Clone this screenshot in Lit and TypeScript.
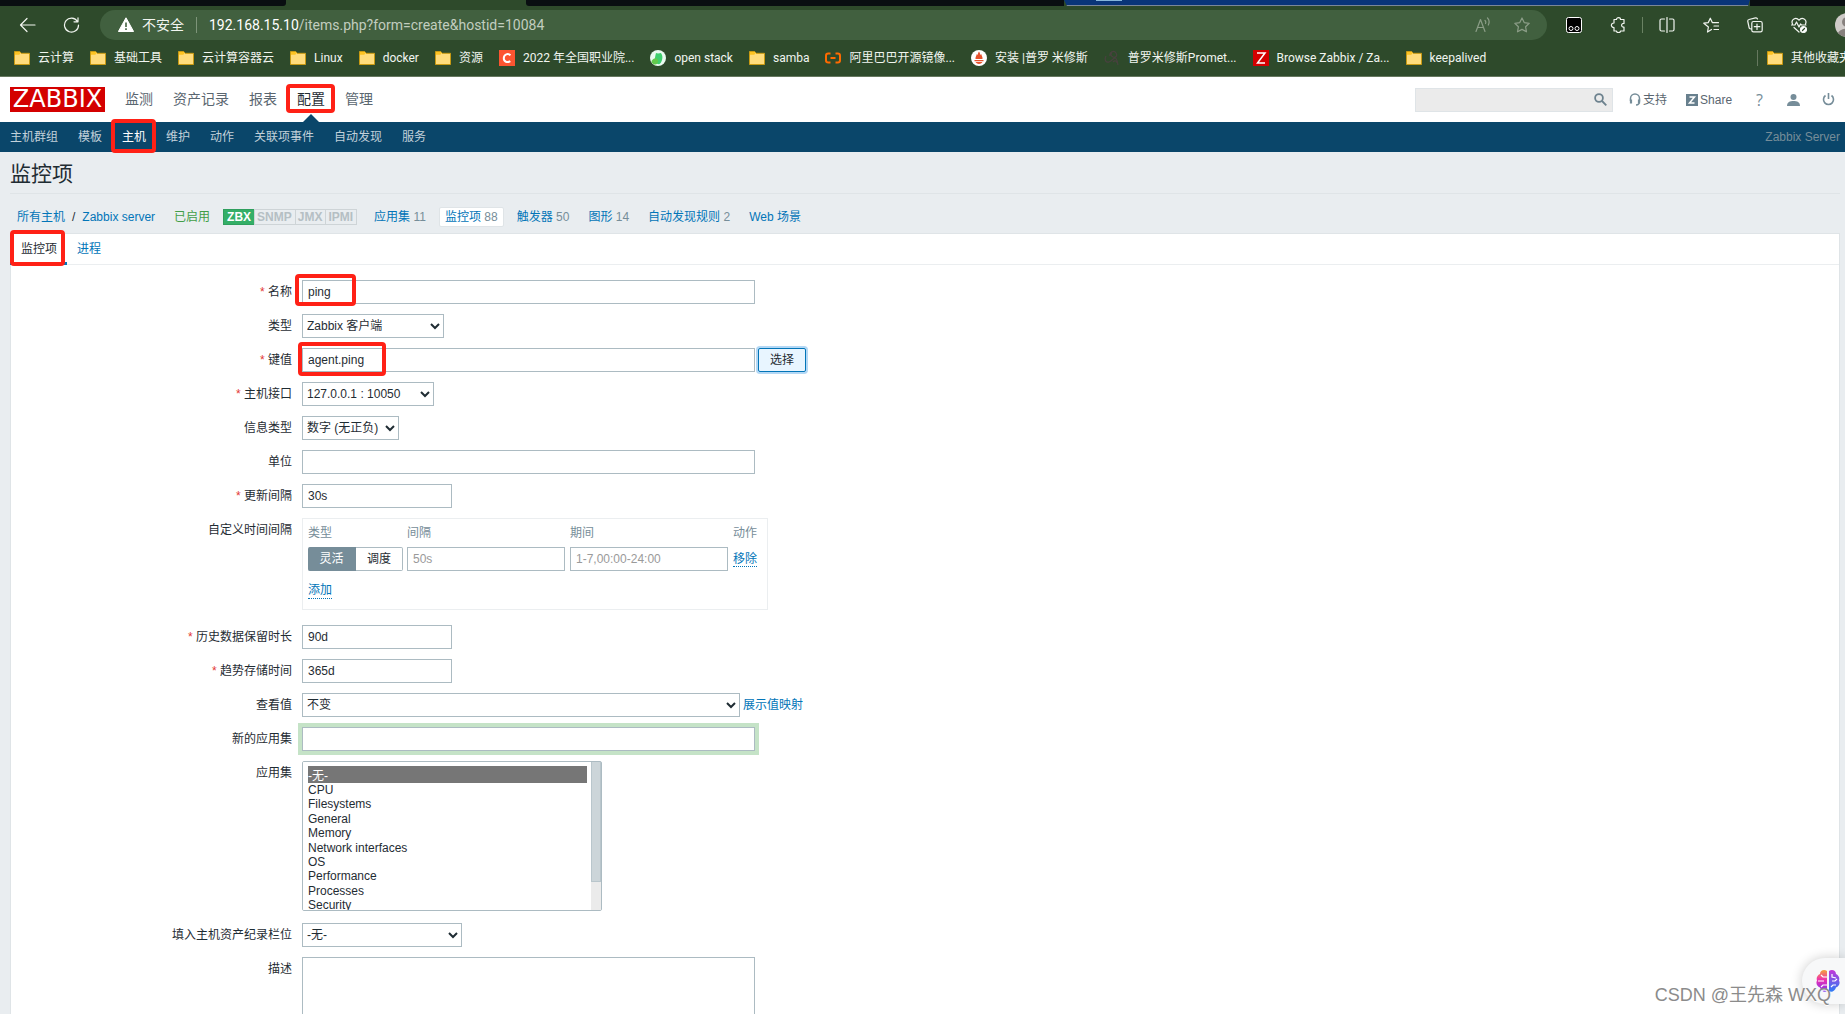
import { LitElement, html, css, svg, nothing } from "lit";
import { customElement } from "lit/decorators.js";
import { classMap } from "lit/directives/class-map.js";

const folder = html`<svg class="ico" viewBox="0 0 16 16"><path d="M.5 1.500h5.200l1.500 1.800h8.300v11.200H.5z" fill="#ffdc7c" stroke="#c99a12"/><path d="M1 2h4.500l1 1.300-1.200 1.400H1z" fill="#fdc321"/></svg>`;
const cIcon = html`<svg class="ico" viewBox="0 0 16 16"><rect width="16" height="16" fill="#fc5531"/><path d="M11.500 5.200C9 3.200 5 4 4.800 8s3.800 5 6.500 3.200" fill="none" stroke="#fff" stroke-width="2"/></svg>`;
const stackIcon = html`<svg class="ico" viewBox="0 0 16 16"><circle cx="8" cy="8" r="8" fill="#eafaf0"/><path d="M5.500 5l.5-2 2 .5 3-.5 1 2c1.200 3-.5 8.500-3 9.200L4 13z" fill="#3fcf6e"/><path d="M1.500 11C3 8 7 7 8 10c.5 3-1.500 5-3.500 4.500S1.500 12.500 1.500 11z" fill="#62c84b"/></svg>`;
const aliIcon = html`<svg class="ico" viewBox="0 0 16 16"><path d="M5.500 3.500H3.200C1.800 3.500 1 4.300 1 5.700v4.600c0 1.400.8 2.200 2.200 2.200h2.300M10.500 3.500h2.300c1.400 0 2.200.8 2.200 2.200v4.600c0 1.400-.8 2.200-2.200 2.200h-2.300M5.500 8h5" fill="none" stroke="#ff6a00" stroke-width="2"/></svg>`;
const promIcon = html`<svg class="ico" viewBox="0 0 16 16"><circle cx="8" cy="8" r="8" fill="#fff"/><path d="M8 1.500c1 1.500 1.200 2.500 1.200 3.500l1-1c.2 1.500 1.600 2.800 1.300 5h-7C4.200 7 5.500 6 5.800 4l1 1C6.800 4 7 3 8 1.500zM3.500 10h9v1.300h-9zM4.500 12h7c-1.500 2.600-5.500 2.600-7 0z" fill="#e6522c"/></svg>`;
const darkIcon = html`<svg class="ico" viewBox="0 0 16 16"><path d="M6 6c-1-4 4-6 6-3s-1 5-3 4-3-3-1-4M2 6c-2 4 0 7 3 6s3-3 6-4c2 0 2 3 3 7M9 12c2-2 4-1 4 1" fill="none" stroke="#49413f" stroke-width="1.200"/></svg>`;
const zIcon = html`<svg class="ico" viewBox="0 0 16 16"><rect width="16" height="16" fill="#d40000"/><path d="M4 3h8L4.500 13H12" fill="none" stroke="#fff" stroke-width="1.500"/></svg>`;

const BOOKMARKS = [
  { icon: folder, text: "云计算" },
  { icon: folder, text: "基础工具" },
  { icon: folder, text: "云计算容器云" },
  { icon: folder, text: "Linux" },
  { icon: folder, text: "docker" },
  { icon: folder, text: "资源" },
  { icon: cIcon, text: "2022 年全国职业院..." },
  { icon: stackIcon, text: "open stack" },
  { icon: folder, text: "samba" },
  { icon: aliIcon, text: "阿里巴巴开源镜像..." },
  { icon: promIcon, text: "安装 |普罗 米修斯" },
  { icon: darkIcon, text: "普罗米修斯Promet..." },
  { icon: zIcon, text: "Browse Zabbix / Za..." },
  { icon: folder, text: "keepalived" },
];

@customElement("browser-bar")
class BrowserBar extends LitElement {
  static styles = css`
    :host { display: block; flex: none; background: #2e4a2b; color: #f1f5f0; font: 12px/16px Roboto, "Noto Sans CJK SC", sans-serif; overflow: hidden; border-bottom: 1px solid #66785f; }
    .tabs { display: flex; height: 6px; }
    .tab { background: #090e11; }
    .tab.one { width: 286px; border-bottom-right-radius: 3px; }
    .gap { width: 240px; }
    .tab.two { flex: 1; border-bottom-left-radius: 3px; }
    .session { width: 686px; display: flex; background: #0a3578; border-bottom: 1px solid #7b8798; box-sizing: border-box; clip-path: polygon(0 0, 100% 0, 684px 100%, 3px 100%); }
    .session i { width: 26px; height: 1px; margin-left: 32px; background: #86b5da; }
    .tab.three { width: 95px; }
    .tools { display: flex; align-items: center; height: 38px; padding-left: 18px; }
    button { all: unset; display: flex; }
    svg { display: block; }
    .back { margin-right: 27px; }
    .reload { margin-right: 20px; }
    .address { flex: 1; min-width: 0; display: flex; align-items: center; height: 30px; border-radius: 15px; background: #41603f; padding: 0 17px 0 18px; font-size: 14px; }
    .address .sec { margin-left: 8px; }
    .address .sep { width: 1px; height: 16px; background: #7d9479; margin: 0 12px; }
    .url { flex: 1; color: #c2cdbf; white-space: nowrap; }
    .url b { font-weight: 400; color: #fff; }
    .faint { gap: 23px; display: flex; }
    .right { display: flex; align-items: center; margin-left: 19px; gap: 28px; }
    .right .sep { width: 1px; height: 16px; background: #6a8263; margin: 0 -12px; }
    .avatar { width: 10px; height: 24px; overflow: hidden; }
    .marks { display: flex; align-items: center; height: 28px; padding: 0 0 4px 14px; gap: 16px; white-space: nowrap; }
    .marks a { color: inherit; text-decoration: none; display: flex; align-items: center; gap: 8px; }
    .ico { width: 16px; height: 16px; flex: none; }
    .other { margin-left: auto; display: flex; border-left: 1px solid #66785f; padding-left: 9px; width: 78px; }
  `;
  render() {
    const line = (d: unknown, w = 16, color = "#f1f5f0") => html`<svg width=${w} height="16" viewBox="0 0 ${w} 16" fill="none" stroke=${color} stroke-width="1.200" stroke-linejoin="round" stroke-linecap="round">${d}</svg>`;
    return html`
      <div class="tabs"><div class="tab one"></div><div class="gap"></div><div class="tab two"></div><div class="session"><i></i></div><div class="tab three"></div></div>
      <div class="tools">
        <button class="back" aria-label="后退">${line(svg`<path d="M17 8H3M9 1.500L2.500 8 9 14.500"/>`, 18)}</button>
        <button class="reload" aria-label="刷新">${line(svg`<path d="M14.500 4.500A7 7 0 1 0 15.500 8M15 .8v4h-4"/>`, 17)}</button>
        <div class="address">
          <svg width="16" height="16" viewBox="0 0 16 16"><path d="M8 .8L15.600 14.500H.4z" fill="#fff" stroke="#fff" stroke-linejoin="round"/><path d="M8 5.500v4.500M8 11.300v1.800" stroke="#41603f" stroke-width="1.600"/></svg>
          <span class="sec">不安全</span><span class="sep"></span>
          <span class="url"><b>192.168.15.10</b>/items.php?form=create&amp;hostid=10084</span>
          <div class="faint">
            <button aria-label="朗读">${line(svg`<path d="M1 14.500L5.500 2.500 10 14.500M2.600 10.500h6M10 3.500c1 1 1 2 .5 3M12.500 1c2 2 2 4.500 .8 7"/>`, 16, "#8b9d87")}</button>
            <button aria-label="收藏">${line(svg`<path d="M8 1l2.200 4.600 5 .7-3.600 3.500.9 5L8 12.400l-4.500 2.400.9-5L.8 6.300l5-.7z"/>`, 16, "#8b9d87")}</button>
          </div>
        </div>
        <div class="right">
          <button aria-label="扩展程序"><svg width="16" height="16" viewBox="0 0 16 16"><rect x=".5" y=".5" width="15" height="15" rx="2" fill="#000" stroke="#fff"/><circle cx="5" cy="11.500" r="2" fill="none" stroke="#fff"/><circle cx="11" cy="11.500" r="2" fill="none" stroke="#fff"/></svg></button>
          <button aria-label="扩展">${line(svg`<path d="M4 2.500h2.500c0-2.500 4-2.500 4 0H14v4c-3.200-.6-3.200 4.100 0 3.500v4h-3.500c0 2.200-4 2.200-4 0H4V10.500c-3.500 0-3.500-4.500 0-4.500z"/>`)}</button>
          <span class="sep"></span>
          <button aria-label="分屏">${line(svg`<path d="M5.500 2H2.500c-.8 0-1.500.7-1.500 1.500v9c0 .8.7 1.500 1.500 1.500h3M10.500 2h3c.8 0 1.500.7 1.500 1.500v9c0 .8-.7 1.500-1.500 1.500h-3M8 .5v15"/>`)}</button>
          <button aria-label="收藏夹">${line(svg`<path d="M8.500 12.500L4.500 15l.9-5L.8 6.200l4.500-.6L7.300 1.200l2 4.400H15.500M11 9h4.500M11 12.500h4.500"/>`)}</button>
          <button aria-label="集锦">${line(svg`<path d="M4 12c-1.500 0-2-.8-2-2L.8 4.500c-.2-1 .3-1.800 1.200-2L8.500 .9c1-.2 1.700.1 2 1.100M6.500 4.500h7c1 0 1.700.7 1.700 1.700v7c0 1-.7 1.700-1.700 1.700h-7c-1 0-1.700-.7-1.700-1.700v-7c0-1 .7-1.700 1.700-1.700zM10 7v5.500M7.300 9.700h5.500"/>`)}</button>
          <button aria-label="健康">${line(svg`<path d="M1.500 7C-.5 2.500 5-.5 8 3.200 11-.5 16.500 2.500 14.500 7M.5 8H4l1.500-3L8 10l1.500-3 1 1H15M3 10.500l5 4.500"/><circle cx="12.500" cy="12.500" r="3" fill="#fff"/><path d="M11.500 13.500l2-2" stroke="#2e4a2b"/>`)}</button>
          <div class="avatar"><svg width="24" height="24" viewBox="0 0 24 24"><circle cx="12" cy="12" r="12" fill="#cfcbc8"/><circle cx="12" cy="9" r="5" fill="#87817e"/><path d="M3 20c2-6 16-6 18 0-4 5-14 5-18 0z" fill="#87817e"/></svg></div>
        </div>
      </div>
      <nav class="marks">
        ${BOOKMARKS.map((b) => html`<a href="#">${b.icon}<span>${b.text}</span></a>`)}
        <div class="other"><a href="#">${folder}<span>其他收藏夹</span></a></div>
      </nav>`;
  }
}

@customElement("zabbix-header")
class ZabbixHeader extends LitElement {
  static styles = css`
    :host { display: block; flex: none; background: #fff; font: 12px/16px "Liberation Sans", "Noto Sans CJK SC", sans-serif; }
    a, button { all: unset; cursor: pointer; }
    .top { display: flex; align-items: center; height: 45px; padding: 0 10px; }
    .logo { background: #d40000; color: #fff; width: 95px; height: 25px; font: 24px/25px "DejaVu Sans", sans-serif; text-align: center; }
    .menu { display: flex; gap: 20px; margin-left: 20px; font-size: 14px; line-height: 20px; padding-bottom: 2px; color: #5a6670; }
    .menu a, .sub a { position: relative; }
    .menu .on { color: #1f2c33; }
    .menu .on::before { content: ""; position: absolute; left: 6px; top: 25px; border: 8px solid transparent; border-top: 0; border-bottom-color: #0a466a; }
    .on::after { content: ""; position: absolute; border: 4px solid #ff2116; border-radius: 4px; z-index: 2; }
    .menu .on::after { inset: -5px -10px -4px -11px; }
    .sub .on::after { inset: -10px -10px -8px -11px; }
    .sub .on { color: #fff; box-shadow: 0 8px 0 -1px #0a466a, 0 9px 0 -1px #fff; }
    .tools { margin-left: auto; display: flex; align-items: center; color: #5a6670; }
    .search { display: flex; align-items: center; box-sizing: border-box; width: 198px; height: 24px; background: #ebebeb; border: 1px solid #dfe4e7; padding-right: 5px; margin-right: 16px; }
    .search input { all: unset; flex: 1; min-width: 0; }
    .tools a { display: flex; align-items: center; gap: 2px; margin-right: 19px; }
    .tools .help { font: 16px/16px "Open Sans", sans-serif; color: #768d99; margin: 0 24px 0 5px; }
    .tools .user { margin-right: 22px; }
    .tools .power { margin: 0; }
    svg { display: block; }
    .sub { display: flex; align-items: center; gap: 20px; height: 30px; padding: 0 5px 0 10px; background: #0a466a; color: #c2d1da; }
    .server { margin-left: auto; color: #768d99; }
  `;
  render() {
    const top = ["监测", "资产记录", "报表", "配置", "管理"];
    const sub = ["主机群组", "模板", "主机", "维护", "动作", "关联项事件", "自动发现", "服务"];
    return html`
      <div class="top">
        <a class="logo" href="#">ZABBIX</a>
        <nav class="menu">${top.map((t) => html`<a href="#" class=${classMap({ on: t === "配置" })}>${t}</a>`)}</nav>
        <div class="tools">
          <div class="search"><input type="text" aria-label="搜索" /><button aria-label="搜索"><svg width="13" height="13" viewBox="0 0 13 13" fill="none" stroke="#6d828e" stroke-width="1.800"><circle cx="5" cy="5" r="3.900"/><path d="M8 8l4.300 4.300"/></svg></button></div>
          <a href="#"><svg width="12" height="13" viewBox="0 0 12 13" fill="none" stroke="#768d99" stroke-width="1.500"><path d="M1.500 8V5.500a4.500 4.500 0 0 1 9 0V8c0 3-1.500 4-3.500 4"/><path d="M2 6.500v4M10 6.500v4" stroke-width="2.200"/></svg>支持</a>
          <a href="#"><svg width="12" height="12" viewBox="0 0 12 12"><rect width="12" height="12" fill="#68808e"/><path d="M3.500 3h5l-5 6h5" fill="none" stroke="#fff" stroke-width="1.500"/></svg>Share</a>
          <a href="#" class="help">?</a>
          <a href="#" class="user" aria-label="用户"><svg width="13" height="12" viewBox="0 0 13 12" fill="#768d99"><circle cx="6.500" cy="3" r="3"/><path d="M0 12c0-4 3-5 6.500-5S13 8 13 12z"/></svg></a>
          <a href="#" class="power" aria-label="退出"><svg width="13" height="13" viewBox="0 0 13 13" fill="none" stroke="#768d99" stroke-width="1.600"><path d="M3.500 2.500a5 5 0 1 0 6 0M6.500 0v6"/></svg></a>
        </div>
      </div>
      <nav class="sub">${sub.map((t) => html`<a href="#" class=${classMap({ on: t === "主机" })}>${t}</a>`)}<span class="server">Zabbix Server</span></nav>`;
  }
}

@customElement("item-form")
class ItemForm extends LitElement {
  static styles = css`
    :host { display: block; font: 12px/16px "Liberation Sans", "Noto Sans CJK SC", sans-serif; color: #1f2c33; padding-top: 15px; }
    .row { display: grid; grid-template-columns: 281px 1fr; column-gap: 10px; margin-bottom: 10px; }
    .label { text-align: right; line-height: 24px; }
    .req::before { content: "* "; color: #e33734; }
    .field { display: flex; align-items: center; min-height: 24px; position: relative; }
    input, select, textarea, button { font: inherit; color: inherit; box-sizing: border-box; margin: 0; border: 1px solid #acbbc2; border-radius: 0; background: #fff; height: 24px; outline: 0; }
    input { padding: 0 5px; }
    input::placeholder { color: #9a9a9a; }
    select { padding: 0; }
    .wide { width: 453px; }
    .short { width: 150px; }
    .w142 { width: 142px; }
    .w132 { width: 132px; }
    .w97 { width: 97px; }
    .w438 { width: 438px; }
    .w160 { width: 160px; }
    .pick { width: 48px; margin-left: 3px; background: #e8f5ff; border-color: #0275b8; border-radius: 2px; box-shadow: 0 0 0 2px #b4d8f5; padding: 0; }
    .glow { box-shadow: 0 0 0 4px #c5e3c7; }
    .mark { position: absolute; border: 4px solid #ff2116; border-radius: 4px; pointer-events: none; }
    .m-name { left: -7px; top: -6px; width: 53px; height: 24px; }
    .m-key { left: -4px; top: -6px; width: 80px; height: 26px; }
    .box { border: 1px solid #ebeef0; padding: 4px 5px 10px 5px; margin-bottom: 5px; }
    table { border-spacing: 0; }
    th { font-weight: 400; text-align: left; color: #768d99; padding: 2px 5px 6px 0; line-height: 16px; }
    td { padding: 0 5px 0 0; }
    th:first-child, td:first-child { padding-right: 4px; }
    .iv { width: 158px; display: block; }
    .toggle { display: flex; }
    .toggle button { width: 47px; padding: 0; border-radius: 0 2px 2px 0; border-left: 0; }
    .toggle .sel { width: 48px; background: #768d99; border-color: #768d99; color: #fff; border-radius: 2px 0 0 2px; }
    a { color: #0275b8; text-decoration: none; }
    .dot { border-bottom: 1px dotted #0275b8; }
    .add { margin-top: 12px; display: inline-block; line-height: 15px; }
    .map { margin-left: 3px; }
    .apps { width: 300px; height: 150px; padding: 4px 14px 0 5px; border-radius: 2px; scrollbar-width: none; }
    .apps option { padding: 0; }
    .apps option:checked { background: #767676 linear-gradient(#767676, #767676); color: #fff; }
    .track { position: absolute; left: 289px; top: 1px; bottom: 1px; width: 10px; background: #ebebeb; pointer-events: none; }
    .track::before { content: ""; display: block; box-sizing: border-box; height: 81%; background: #ccd5d9; border: 1px solid #b9c6cc; border-top: 0; }
    textarea { height: 120px; resize: none; display: block; }
    .tall { margin-bottom: 12px; }
  `;
  private row(label: string, body: unknown, id = "", req = false, cls = "") {
    return html`<div class="row ${cls}"><label class="label ${req ? "req" : ""}" for=${id || nothing}>${label}</label><div class="field">${body}</div></div>`;
  }
  render() {
    const apps = ["-无-", "CPU", "Filesystems", "General", "Memory", "Network interfaces", "OS", "Performance", "Processes", "Security"];
    return html`<form>
      ${this.row("名称", html`<input id="name" class="wide" .value=${"ping"} /><span class="mark m-name"></span>`, "name", true)}
      ${this.row("类型", html`<select id="type" class="w142"><option>Zabbix 客户端</option></select>`, "type")}
      ${this.row("键值", html`<input id="key" class="wide" .value=${"agent.ping"} /><button type="button" class="pick">选择</button><span class="mark m-key"></span>`, "key", true)}
      ${this.row("主机接口", html`<select id="iface" class="w132"><option>127.0.0.1 : 10050</option></select>`, "iface", true)}
      ${this.row("信息类型", html`<select id="vtype" class="w97"><option>数字 (无正负)</option></select>`, "vtype")}
      ${this.row("单位", html`<input id="units" class="wide" />`, "units")}
      ${this.row("更新间隔", html`<input id="delay" class="short" .value=${"30s"} />`, "delay", true)}
      ${this.row("自定义时间间隔", html`<div class="box"><table>
        <thead><tr><th>类型</th><th>间隔</th><th>期间</th><th>动作</th></tr></thead>
        <tbody><tr>
          <td><div class="toggle"><button type="button" class="sel">灵活</button><button type="button">调度</button></div></td>
          <td><input class="iv" placeholder="50s" aria-label="间隔" /></td>
          <td><input class="iv" placeholder="1-7,00:00-24:00" aria-label="期间" /></td>
          <td><a class="dot" href="#">移除</a></td>
        </tr></tbody></table><a class="dot add" href="#">添加</a></div>`)}
      ${this.row("历史数据保留时长", html`<input id="history" class="short" .value=${"90d"} />`, "history", true)}
      ${this.row("趋势存储时间", html`<input id="trends" class="short" .value=${"365d"} />`, "trends", true)}
      ${this.row("查看值", html`<select id="map" class="w438"><option>不变</option></select><a class="map" href="#">展示值映射</a>`, "map")}
      ${this.row("新的应用集", html`<input id="newapp" class="wide glow" />`, "newapp")}
      ${this.row("应用集", html`<select id="apps" class="apps" multiple size="10">${apps.map((a, i) => html`<option ?selected=${i === 0}>${a}</option>`)}</select><span class="track"></span>`, "apps", false, "tall")}
      ${this.row("填入主机资产纪录栏位", html`<select id="inv" class="w160"><option>-无-</option></select>`, "inv")}
      ${this.row("描述", html`<textarea id="desc" class="wide"></textarea>`, "desc")}
    </form>`;
  }
}

@customElement("app-root")
class AppRoot extends LitElement {
  static styles = css`
    :host { display: flex; flex-direction: column; height: 100vh; overflow: hidden; position: relative; background: #e9edf0; font: 12px/16px "Liberation Sans", "Noto Sans CJK SC", sans-serif; color: #1f2c33; }
    main { flex: 1; min-height: 0; overflow: hidden; display: flex; flex-direction: column; padding: 0 5px 0 10px; }
    h1 { font-size: 21px; line-height: 43px; font-weight: 400; margin: 0; border-bottom: 1px solid #dfe4e7; flex: none; height: 41px; }
    a { color: #0275b8; text-decoration: none; }
    .crumbs { display: flex; align-items: center; flex: none; padding: 6px 0 0 7px; box-sizing: border-box; height: 39px; white-space: nowrap; }
    .slash { margin: 0 7px; }
    .ok { color: #429e47; margin: 0 13px 0 19px; }
    .badges { display: flex; margin-right: 17px; font-weight: 700; line-height: 14px; }
    .badges span { border: 1px solid #ced4d7; margin-left: -1px; padding: 0 3px 0 2px; color: #b5bfc4; }
    .badges .zbx { background: #34af67; border-color: #2f9f5e; color: #fff; margin: 0; padding: 0 3px; }
    .num { color: #768d99; }
    .links { display: flex; align-items: center; gap: 19px; }
    .links .cur { background: #fff; border: 1px solid #dfe4e7; padding: 1px 5px; margin: 0 -6px; border-radius: 2px; }
    .panel { background: #fff; border: 1px solid #dfe4e7; flex: 1 0 auto; min-height: 0; }
    .tabs { display: flex; height: 30px; border-bottom: 1px solid #ebeef0; line-height: 31px; }
    .tabs a { padding: 0 10px; position: relative; }
    .tabs .cur { color: #1f2c33; box-shadow: inset 0 -3px 0 #0275b8; height: 31px; margin-left: -1px; padding: 0 10px 0 11px; }
    .tabs .cur::after { content: ""; position: absolute; inset: -4px 2px -1px 0; border: 4px solid #ff2116; border-radius: 4px; }
    .bubble { position: absolute; right: 0; bottom: 10px; width: 43px; height: 46px; box-sizing: border-box; padding: 0 0 0 14px; background: #f7f8f9; border-radius: 23px 0 0 23px; box-shadow: 0 0 12px #0003; border: 0; }
    .water { position: absolute; right: 14px; bottom: 6px; font: 18px/26px "Liberation Sans", "Noto Sans CJK SC", sans-serif; color: #8b8b8b; text-shadow: 0 1px 0 #fff; white-space: nowrap; }
    svg { display: block; }
  `;
  render() {
    const links: [string, string][] = [["应用集", "11"], ["监控项", "88"], ["触发器", "50"], ["图形", "14"], ["自动发现规则", "2"], ["Web 场景", ""]];
    return html`
      <browser-bar></browser-bar>
      <zabbix-header></zabbix-header>
      <main>
        <h1>监控项</h1>
        <div class="crumbs">
          <a href="#">所有主机</a><span class="slash">/</span><a href="#">Zabbix server</a>
          <span class="ok">已启用</span>
          <span class="badges"><span class="zbx">ZBX</span><span>SNMP</span><span>JMX</span><span>IPMI</span></span>
          <nav class="links">${links.map(([t, n], i) => html`<span class=${classMap({ cur: i === 1 })}><a href="#">${t}</a>${n ? html` <span class="num">${n}</span>` : nothing}</span>`)}</nav>
        </div>
        <section class="panel">
          <nav class="tabs"><a href="#" class="cur">监控项</a><a href="#">进程</a></nav>
          <item-form></item-form>
        </section>
      </main>
      <button class="bubble" aria-label="助手"><svg width="24" height="24" viewBox="0 0 24 24">
        <defs><linearGradient id="l" x1="0" y1="0" x2="0" y2="1"><stop offset="0" stop-color="#f5a13c"/><stop offset=".45" stop-color="#ee2fb0"/><stop offset="1" stop-color="#7a35f0"/></linearGradient><linearGradient id="r" x1="0" y1="0" x2="0" y2="1"><stop offset="0" stop-color="#c437d8"/><stop offset="1" stop-color="#2b7cf6"/></linearGradient></defs>
        <path d="M11 2C8 0 4 1.500 4 5 1.500 6 0 9 1 11.500c-1.500 3 0 6 3 7C5 22 8.500 24 11 22z" fill="url(#l)"/><path d="M13 2c3-2 7-.5 7 3 2.500 1 4 4 3 6.500 1.500 3 0 6-3 7-1 3.500-4.500 5.500-7 3.500z" fill="url(#r)"/>
        <path d="M5 6l2 2h4M2 12h6M11 16H7l-2 2M16 5v3l4 1M16 12h3l2-2M15 18l2-2h3" fill="none" stroke="#fff" stroke-width="1.200"/></svg></button>
      <div class="water">CSDN @王先森 WXQ</div>`;
  }
}
